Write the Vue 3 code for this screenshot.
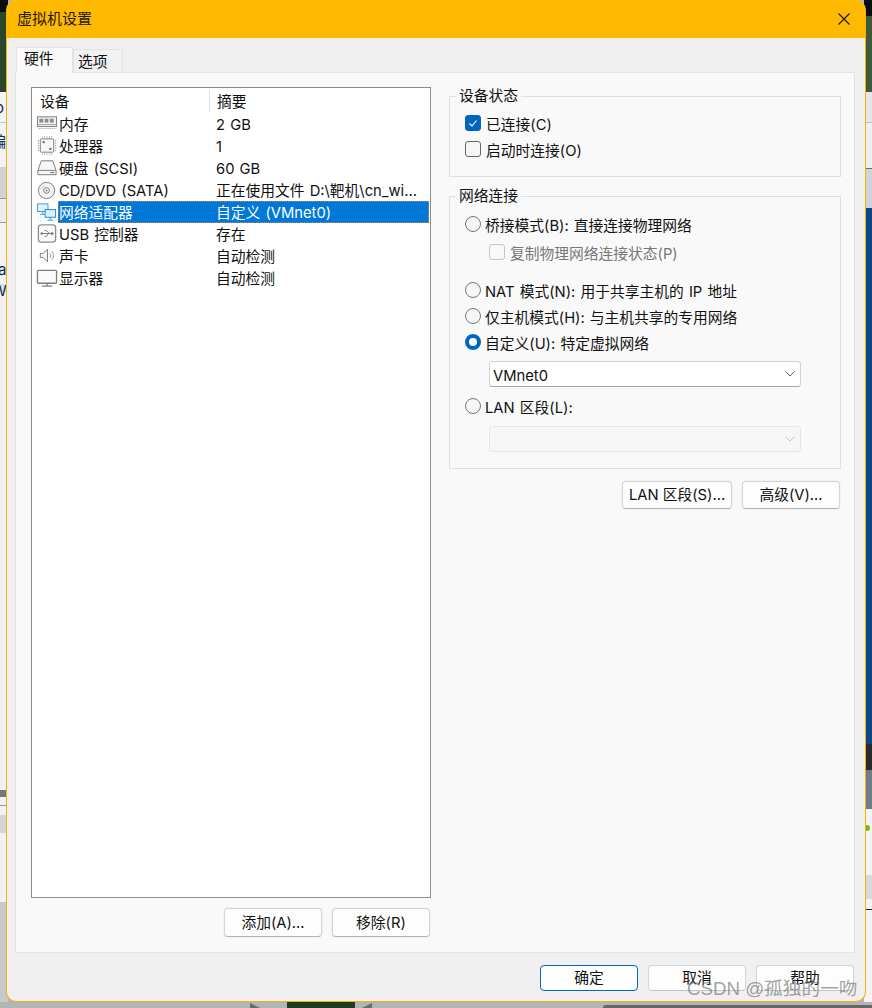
<script setup>
const devices = [
  { icon: 'mem', name: '内存', summary: '2 GB' },
  { icon: 'cpu', name: '处理器', summary: '1' },
  { icon: 'disk', name: '硬盘 (SCSI)', summary: '60 GB' },
  { icon: 'cd', name: 'CD/DVD (SATA)', summary: '正在使用文件 D:\\靶机\\cn_wi...' },
  { icon: 'net', name: '网络适配器', summary: '自定义 (VMnet0)', selected: true },
  { icon: 'usb', name: 'USB 控制器', summary: '存在' },
  { icon: 'snd', name: '声卡', summary: '自动检测' },
  { icon: 'mon', name: '显示器', summary: '自动检测' },
]
</script>

<template>
  <div class="desk">
    <div class="strip strip-left">
      <span class="frag f1">o</span>
      <span class="frag f2">编</span>
      <span class="frag f3">a</span>
      <span class="frag f4">W</span>
    </div>
    <div class="strip strip-right"><span class="dot"></span></div>
    <div class="bottom-dark"></div>
    <div class="tri tri-l"></div>
    <div class="tri tri-r"></div>
    <div class="bottom-right"></div>

    <div class="window">
      <header class="titlebar">
        <span class="title">虚拟机设置</span>
        <svg class="close" width="12" height="12" viewBox="0 0 12 12"><path d="M.5.5l11 11M11.5.5l-11 11" stroke="#1a1300" stroke-width="1.1" fill="none"/></svg>
      </header>

      <div class="tabs">
        <div class="tab active">硬件</div>
        <div class="tab">选项</div>
      </div>

      <main class="panel">
        <section class="left">
          <div class="list">
            <div class="list-head">
              <span class="col-a">设备</span>
              <span class="col-b">摘要</span>
            </div>
            <div v-for="d in devices" :key="d.name" class="row">
              <span class="icon-cell">
                <svg width="23" height="22" viewBox="0 0 23 22" fill="none" stroke="#7a7a7a" stroke-width="1">
                  <template v-if="d.icon === 'mem'">
                    <rect x="1.5" y="3.5" width="20" height="10" fill="#f2f2f2"/>
                    <path d="M1.5 11.5h20" stroke="#a8a8a8"/>
                    <rect x="3.5" y="5.5" width="4" height="4" fill="#8c8c8c" stroke="none"/>
                    <rect x="9" y="5.5" width="4" height="4" fill="#8c8c8c" stroke="none"/>
                    <rect x="14.5" y="5.5" width="4" height="4" fill="#8c8c8c" stroke="none"/>
                    <path d="M3 15.5h17" stroke-dasharray="1 1"/>
                  </template>
                  <template v-else-if="d.icon === 'cpu'">
                    <rect x="4.5" y="3.5" width="14" height="14" rx="1" fill="#f6f6f6"/>
                    <path d="M6 1.5h11M6 19.5h11M2.5 5v11M20.5 5v11" stroke-dasharray="1 1.5"/>
                    <rect x="7" y="6" width="2" height="2" fill="#555" stroke="none"/>
                    <rect x="14" y="13" width="2" height="2" fill="#555" stroke="none"/>
                  </template>
                  <template v-else-if="d.icon === 'disk'">
                    <path d="M5.5 3.5h12l3.5 10v4.500h-19v-4.500z" fill="#f6f6f6"/>
                    <path d="M2 13.5h19" />
                    <path d="M15 15.8h4" stroke="#606060"/>
                  </template>
                  <template v-else-if="d.icon === 'cd'">
                    <circle cx="11" cy="11.5" r="8.5" fill="#f4f4f4"/>
                    <circle cx="11" cy="11.5" r="3" />
                    <circle cx="11" cy="11.5" r="1" fill="#808080" stroke="none"/>
                    <path d="M6 9.5a5.500 5.500 0 0 1 3-3" stroke="#c0c0c0"/>
                  </template>
                  <template v-else-if="d.icon === 'net'">
                    <rect x="1.5" y="2.5" width="11" height="8" fill="#dff0fb" stroke="#3d9bd8"/>
                    <path d="M7 10.5v2.500M4 13.5h6" stroke="#3d9bd8"/>
                    <rect x="9.5" y="8.5" width="11" height="8" fill="#dff0fb" stroke="#1a85cf"/>
                    <path d="M15 16.5v2M12 19.5h6" stroke="#1a85cf"/>
                    <path d="M2 16.5h5M2 19.5h6" stroke="#9cc7e4" stroke-dasharray="1 1.5"/>
                  </template>
                  <template v-else-if="d.icon === 'usb'">
                    <rect x="2.5" y="1.5" width="18" height="18" rx="3" fill="#fafafa" stroke="#8f8f8f" stroke-width="1.4"/>
                    <path d="M5 10.5h12M14 10.5l-3-3H9M13 10.5l-2 3H9" stroke="#7a7a7a"/>
                    <circle cx="6" cy="10.5" r="1.3" fill="#7a7a7a" stroke="none"/>
                    <path d="M16 8.5l3 2-3 2z" fill="#7a7a7a" stroke="none"/>
                  </template>
                  <template v-else-if="d.icon === 'snd'">
                    <path d="M4.500 8.5h3l4.500-4.500v13l-4.500-4.500h-3z" fill="#f6f6f6"/>
                    <path d="M14.5 8a4 4 0 0 1 0 5M16.5 6a7 7 0 0 1 0 9" stroke="#9a9a9a"/>
                  </template>
                  <template v-else>
                    <rect x="1.5" y="3" width="20" height="13.5" rx="1" fill="#fafafa" stroke="#7f7f7f" stroke-width="1.4"/>
                    <path d="M11.5 17v2M6 19.5h11" stroke="#7f7f7f" stroke-width="1.4"/>
                  </template>
                </svg>
              </span>
              <div class="row-body" :class="{ selected: d.selected }">
                <span class="col-name">{{ d.name }}</span>
                <span class="col-sum">{{ d.summary }}</span>
              </div>
            </div>
          </div>
          <div class="btn-row list-btns">
            <button class="btn">添加(A)...</button>
            <button class="btn">移除(R)</button>
          </div>
        </section>

        <section class="right">
          <fieldset class="group g1">
            <legend>设备状态</legend>
            <label class="opt">
              <span class="check on">
                <svg width="12" height="12" viewBox="0 0 12 12"><path d="M2.5 6.5l2.5 2.5 4.500-5.500" stroke="#fff" stroke-width="1.1" fill="none"/></svg>
              </span><span class="txt">已连接(C)</span>
            </label>
            <label class="opt">
              <span class="check"></span><span class="txt">启动时连接(O)</span>
            </label>
          </fieldset>

          <fieldset class="group g2">
            <legend>网络连接</legend>
            <label class="opt"><span class="radio"></span><span class="txt">桥接模式(B): 直接连接物理网络</span></label>
            <label class="opt sub disabled"><span class="check dis"></span><span class="txt">复制物理网络连接状态(P)</span></label>
            <label class="opt nat"><span class="radio"></span><span class="txt">NAT 模式(N): 用于共享主机的 IP 地址</span></label>
            <label class="opt"><span class="radio"></span><span class="txt">仅主机模式(H): 与主机共享的专用网络</span></label>
            <label class="opt"><span class="radio on"></span><span class="txt">自定义(U): 特定虚拟网络</span></label>
            <div class="select">
              <span class="txt">VMnet0</span>
              <svg width="10" height="6" viewBox="0 0 10 6"><path d="M.5.5L5 5l4.500-4.500" stroke="#5f5f5f" fill="none"/></svg>
            </div>
            <label class="opt lan"><span class="radio"></span><span class="txt">LAN 区段(L):</span></label>
            <div class="select off">
              <span></span>
              <svg width="10" height="6" viewBox="0 0 10 6"><path d="M.5.5L5 5l4.500-4.500" stroke="#c4c4c4" fill="none"/></svg>
            </div>
          </fieldset>

          <div class="btn-row net-btns">
            <button class="btn wide">LAN 区段(S)...</button>
            <button class="btn">高级(V)...</button>
          </div>
        </section>
      </main>

      <footer class="foot">
        <button class="btn primary">确定</button>
        <button class="btn plain">取消</button>
        <button class="btn plain">帮助</button>
      </footer>
    </div>

    <div class="watermark">CSDN @孤独的一吻</div>
  </div>
</template>

<style>
html, body { margin: 0; padding: 0; }
</style>

<style scoped>
* { box-sizing: border-box; }
.desk {
  position: relative;
  width: 872px;
  height: 1008px;
  overflow: hidden;
  background: #b4b4b4;
  font-family: Inter, "Noto Sans CJK SC", sans-serif;
  font-size: 14.75px;
  line-height: 22px;
  word-spacing: 1px;
  color: #111;
}
.strip { position: absolute; top: 0; width: 8px; height: 1002px; overflow: hidden; }
.strip-left {
  left: 0;
  background: linear-gradient(#0d0d0d 0 12px, #2b4729 12px 92px, #f4f4f4 92px 122px, #c9c9c9 122px 123px, #f2f2f2 123px 167px, #d2d2d4 167px 198px, #9a9a9a 198px 199px, #ececec 199px 222px, #9a9a9a 222px 223px, #f2f2f2 223px 284px, #dedede 284px 292px, #f1f1f1 292px 790px, #777 790px 797px, #f1f1f1 797px 805px, #999 805px 806px, #f1f1f1 806px 815px, #d4d4d6 815px 833px, #f1f1f1 833px 902px, #c6c6c6 902px 903px, #c8c8c8 903px 1002px);
}
.strip-right {
  right: 0;
  background: linear-gradient(#0a0d0e 0 16px, #3e5a3b 16px 92px, #e6e6e6 92px 122px, #bbb 122px 123px, #efefef 123px 168px, #6d6d6d 168px 169px, #d2d3d6 169px 208px, #0c4887 208px 744px, #2a2a2c 744px 770px, #6f7b8a 770px 809px, #f4f4f4 809px 875px, #d9d9d9 875px 899px, #f3f3f3 899px 909px, #222 909px 910px, #f3f3f3 910px 1002px);
}
.dot { position: absolute; left: 0; top: 825px; width: 6px; height: 6px; border-radius: 50%; background: #7cb518; }
.frag { position: absolute; left: -6px; line-height: 16px; font-size: 15px; color: #0b2a5c; }
.f1 { top: 100px; left: -5px; }
.f2 { top: 134px; left: -9px; }
.f3 { top: 262px; left: -2px; }
.f4 { top: 283px; left: -8px; }
.bottom-dark { position: absolute; left: 287px; top: 1000px; width: 68px; height: 8px; background: #1f3a1e; }
.tri { position: absolute; top: 1003px; width: 0; height: 0; border-top: 5px solid transparent; }
.tri-l { left: 250px; border-left: 10px solid #666c70; }
.tri-r { left: 362px; border-right: 10px solid #666c70; }
.bottom-right { position: absolute; left: 603px; top: 1005px; width: 269px; height: 3px; background: #666; border-radius: 4px 0 0 0; }

.window {
  position: relative;
  margin-left: 6px;
  width: 860px;
  height: 1002px;
  display: flex;
  flex-direction: column;
  background: #f0f0f0;
  border: 1px solid #f5b400;
  border-top: 0;
  border-radius: 10px;
  overflow: hidden;
}
.titlebar {
  flex: none;
  height: 38px;
  background: #ffb900;
  display: flex;
  align-items: center;
  justify-content: space-between;
  padding: 0 16px 0 11px;
  margin: 0 -1px;
}
.title { font-size: 15px; color: #241a00; padding-bottom: 1px; }

.tabs { flex: none; display: flex; align-items: flex-end; height: 34px; padding-left: 9px; }
.tab {
  width: 50px;
  height: 23px;
  padding-left: 4px;
  background: #f1f1f1;
  border: 1px solid #e3e3e3;
  border-bottom: 0;
  line-height: 24px;
}
.tab.active {
  width: 57px;
  height: 26px;
  padding-left: 7px;
  background: #f9f9f9;
  line-height: 22px;
  margin-bottom: -1px;
  position: relative;
  z-index: 1;
}

.panel {
  flex: none;
  height: 881px;
  margin: 0 10px 0 8px;
  background: #f9f9f9;
  border: 1px solid #e3e3e3;
  padding: 14px 0 0 15px;
  display: flex;
  gap: 18px;
}
.left { width: 400px; flex: none; }
.list {
  height: 811px;
  background: #fff;
  border: 1px solid #8b8b97;
}
.list-head { display: flex; height: 25px; padding-top: 2px; }
.col-a { width: 178px; padding: 1px 0 0 8px; height: 22px; border-right: 1px solid #e0e0e0; }
.col-b { padding: 1px 0 0 7px; }
.row { display: flex; height: 22px; }
.icon-cell { flex: none; width: 26px; padding-left: 4px; display: flex; align-items: center; }
.row-body { flex: 1; margin-right: 1px; display: flex; align-items: center; border: 1px solid transparent; white-space: nowrap; }
.row-body.selected { background: #0078d7; color: #fff; border: 1px dotted #c9813c; }
.col-name { width: 157px; flex: none; padding-top: 1px; }
.col-sum { padding-top: 1px; }

.btn-row { display: flex; justify-content: flex-end; gap: 10px; }
.list-btns { margin: 10px 1px 0 0; }
.btn {
  width: 98px;
  height: 29px;
  padding: 0;
  font: inherit;
  color: #111;
  background: #fdfdfd;
  border: 1px solid #d4d4d4;
  border-bottom-color: #b4b4b4;
  border-radius: 4px;
  box-shadow: 0 0 0 1px #f1f1f1;
}
.btn.wide { width: 110px; }

.right { width: 392px; flex: none; }
.group { margin: 0; padding: 0; border: 1px solid #dfdfdf; min-width: 0; }
.group legend { margin-left: 6px; padding: 0 3px; line-height: 18px; }
.g1 { padding: 5px 0 14px; }
.g2 { margin-top: 10px; padding: 6px 0 16px; }
.opt { display: flex; align-items: center; height: 26px; padding-left: 15px; white-space: nowrap; }
.txt { padding-top: 3px; }
.check, .radio {
  flex: none;
  width: 16px;
  height: 16px;
  margin-right: 5px;
  background: #f6f6f6;
  border: 1px solid #666;
  display: flex;
  align-items: center;
  justify-content: center;
}
.check { border-radius: 3px; }
.check.on { background: #0067c0; border-color: #0067c0; }
.radio { border-radius: 50%; margin-right: 4px; border-color: #777; }
.radio.on { background: #fff; border: 4.5px solid #0067c0; }
.sub { margin-top: 2px; padding-left: 39px; color: #777; }
.check.dis { border-color: #c6c6c6; background: #f9f9f9; }
.nat { margin-top: 12px; }
.lan { margin-top: 6px; }
.select {
  margin: 6px 0 0 39px;
  width: 312px;
  height: 26px;
  padding: 0 3px;
  background: #fff;
  border: 1px solid #d2d2d2;
  border-bottom-color: #a8a8a8;
  border-radius: 3px;
  display: flex;
  align-items: center;
  justify-content: space-between;
}
.select svg { margin-right: 2px; }
.select.off { margin-top: 7px; background: #f6f6f6; border-color: #e6e6e6; }
.net-btns { margin: 12px 1px 0 0; }
.net-btns .btn { height: 28px; }

.foot { flex: none; display: flex; justify-content: flex-end; gap: 10px; padding: 12px 11px 0 0; }
.foot .btn { height: 26px; box-shadow: none; }
.btn.primary { border: 1px solid #0067c0; background: #fff; }
.btn.plain { border-color: #d4d4d4; border-bottom-color: #c4c4c4; }

.watermark {
  position: absolute;
  left: 687px;
  top: 976px;
  font-family: "Liberation Sans", "Noto Sans CJK SC", sans-serif;
  font-size: 18.7px;
  line-height: 26px;
  word-spacing: 0;
  white-space: nowrap;
  color: rgba(110, 110, 110, 0.65);
}
</style>
